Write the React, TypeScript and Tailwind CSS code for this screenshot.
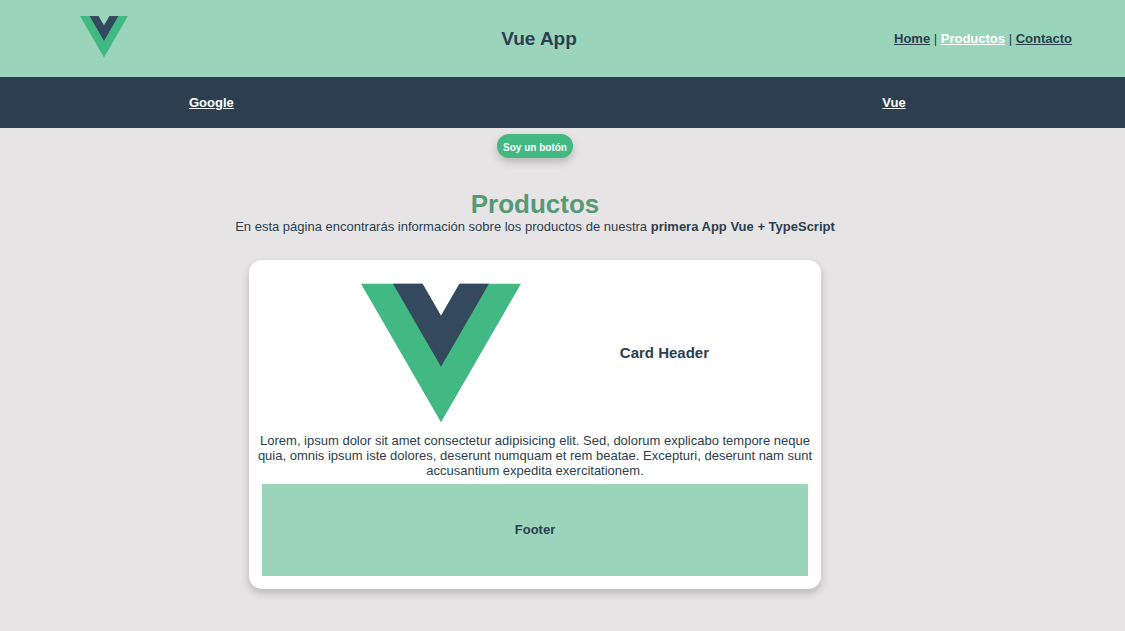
import React from "react";

function VueLogo({ className }: { className: string }) {
  return (
    <svg viewBox="0 0 261.76 226.69" className={className} role="img" aria-label="Vue logo">
      <path d="M161.096.001l-30.225 52.351L100.647.001H-.005l130.877 226.688L261.749.001z" fill="#42b883" />
      <path d="M161.096.001l-30.225 52.351L100.647.001H52.346l78.526 136.01L209.398.001z" fill="#35495e" />
    </svg>
  );
}

function Header() {
  return (
    <header className="flex items-center justify-between bg-[#9ad5bb] pl-20 pr-[53px] py-4">
      <div className="w-[104px] self-start">
        <VueLogo className="block h-auto w-12" />
      </div>
      <h1 className="text-[19px] leading-[45px] font-bold">Vue App</h1>
      <nav className="whitespace-nowrap font-bold">
        <a href="#home" className="underline">Home</a>
        <span className="font-normal"> | </span>
        <a href="#productos" className="text-white underline" aria-current="page">Productos</a>
        <span className="font-normal"> | </span>
        <a href="#contacto" className="underline">Contacto</a>
      </nav>
    </header>
  );
}

function LinkBar() {
  return (
    <nav className="flex justify-between bg-[#2c3e50] py-[18px] pl-[16.8%] pr-[19.5%] font-bold text-white">
      <a href="#google" className="underline">Google</a>
      <a href="#vue" className="underline">Vue</a>
    </nav>
  );
}

function Card() {
  return (
    <article className="mt-[26px] w-full max-w-[572px] rounded-[13px] bg-white p-[13px] shadow-[0_4px_8px_0_rgba(0,0,0,0.2)]">
      <div className="flex items-center justify-evenly">
        <VueLogo className="size-40" />
        <h3 className="text-[15px] leading-[18px] font-bold">Card Header</h3>
      </div>
      <p className="-mx-2">
        Lorem, ipsum dolor sit amet consectetur adipisicing elit. Sed, dolorum explicabo tempore
        neque quia, omnis ipsum iste dolores, deserunt numquam et rem beatae. Excepturi, deserunt
        nam sunt accusantium expedita exercitationem.
      </p>
      <footer className="mt-[6px] flex h-[92px] items-center justify-center bg-[#9ad5bb] pb-[2px] font-bold">
        Footer
      </footer>
    </article>
  );
}

export default function App() {
  return (
    <div className="min-h-screen bg-[#e6e4e4] text-[13px] leading-[15px] text-[#2c3e50] [font-family:'Liberation_Sans',Arial,sans-serif]">
      <Header />
      <LinkBar />
      <main className="mr-[55px] flex flex-col items-center pt-[6px] pb-10 text-center">
        <button
          type="button"
          className="h-6 rounded-full bg-[#42b883] px-[6px] pt-[2px] text-[10px] font-bold text-white shadow-[0_4px_8px_0_rgba(0,0,0,0.2)]"
        >
          Soy un botón
        </button>
        <h2 className="mt-[31px] text-[26px] leading-[30px] font-bold text-[#559977]">Productos</h2>
        <p>
          En esta página encontrarás información sobre los productos de nuestra{" "}
          <strong>primera App Vue + TypeScript</strong>
        </p>
        <Card />
      </main>
    </div>
  );
}
